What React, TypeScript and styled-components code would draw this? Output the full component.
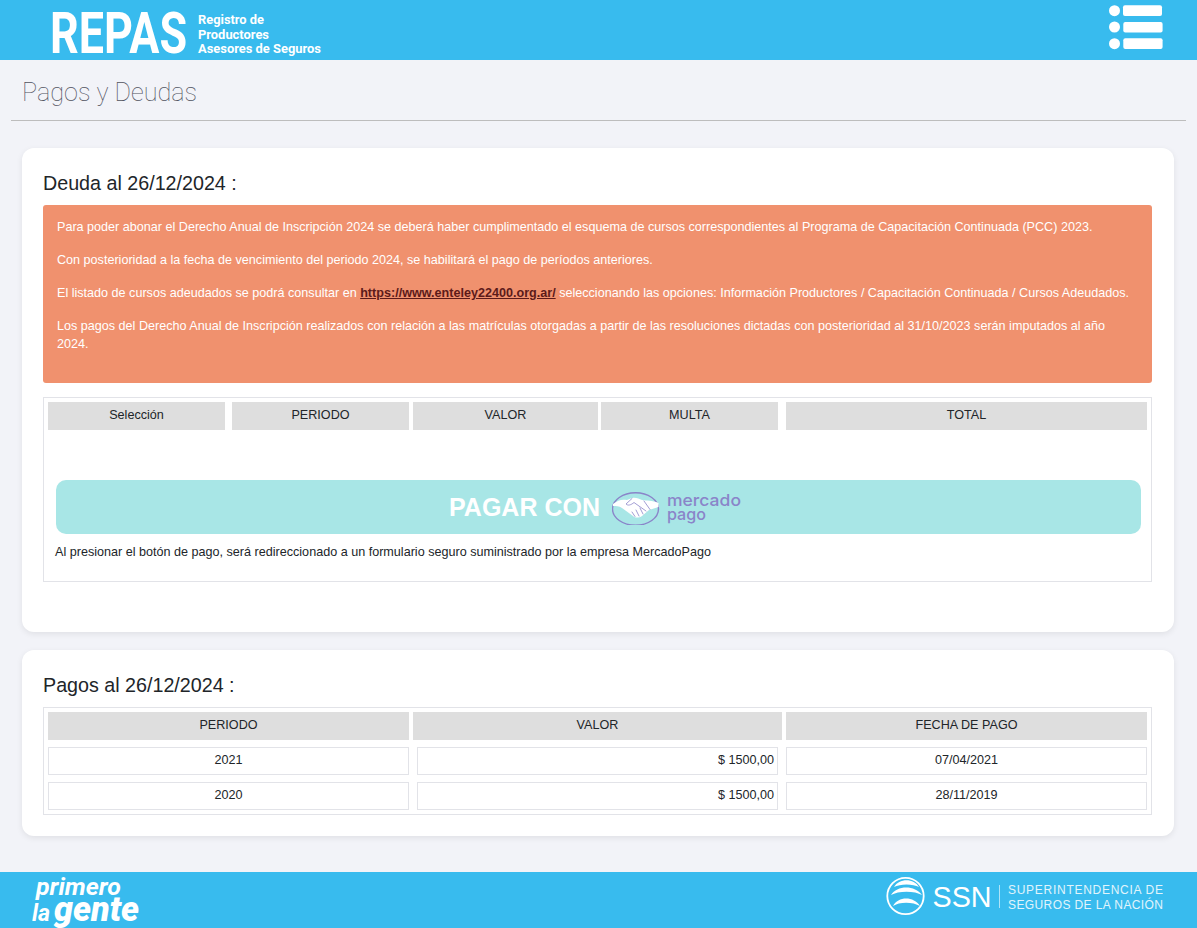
import styled, { createGlobalStyle } from "styled-components";

const debtColumns = [
  { label: "Selección", width: 177, gapAfter: 7 },
  { label: "PERIODO", width: 177, gapAfter: 4 },
  { label: "VALOR", width: 185, gapAfter: 3 },
  { label: "MULTA", width: 177, gapAfter: 8 },
  { label: "TOTAL", width: 361, gapAfter: 0 },
];

const payments = [
  { period: "2021", value: "$ 1500,00", date: "07/04/2021" },
  { period: "2020", value: "$ 1500,00", date: "28/11/2019" },
];

export default function App() {
  return (
    <Page>
      <GlobalStyle />
      <Header>
        <RepasLogo />
        <MenuIcon />
      </Header>

      <Main>
        <PageTitle>Pagos y Deudas</PageTitle>

        <DebtCard>
          <CardTitle>Deuda al 26/12/2024 :</CardTitle>
          <Alert>
            <AlertLine>
              Para poder abonar el Derecho Anual de Inscripción 2024 se deberá haber cumplimentado el esquema de cursos correspondientes al Programa de Capacitación Continuada (PCC) 2023.
            </AlertLine>
            <AlertLine>
              Con posterioridad a la fecha de vencimiento del periodo 2024, se habilitará el pago de períodos anteriores.
            </AlertLine>
            <AlertLine>
              El listado de cursos adeudados se podrá consultar en <AlertLink href="#">https://www.enteley22400.org.ar/</AlertLink> seleccionando las opciones: Información Productores / Capacitación Continuada / Cursos Adeudados.
            </AlertLine>
            <AlertLine>
              Los pagos del Derecho Anual de Inscripción realizados con relación a las matrículas otorgadas a partir de las resoluciones dictadas con posterioridad al 31/10/2023 serán imputados al año 2024.
            </AlertLine>
          </Alert>

          <DebtTable>
            <HeadRow>
              {debtColumns.map((col) => (
                <HeadCell key={col.label} $width={col.width} $gapAfter={col.gapAfter}>
                  {col.label}
                </HeadCell>
              ))}
            </HeadRow>
            <PayButton type="button">
              PAGAR CON
              <MercadoPagoLogo />
            </PayButton>
            <PayNote>
              Al presionar el botón de pago, será redireccionado a un formulario seguro suministrado por la empresa MercadoPago
            </PayNote>
          </DebtTable>
        </DebtCard>

        <PaymentsCard>
          <CardTitle>Pagos al 26/12/2024 :</CardTitle>
          <PaymentsTable>
            <HeadRow>
              <HeadCell $width={361} $gapAfter={4}>PERIODO</HeadCell>
              <HeadCell $width={369} $gapAfter={4}>VALOR</HeadCell>
              <HeadCell $width={361} $gapAfter={0}>FECHA DE PAGO</HeadCell>
            </HeadRow>
            {payments.map((row) => (
              <BodyRow key={row.period}>
                <BodyCell $width={361} $gapAfter={8}>{row.period}</BodyCell>
                <BodyCell $width={361} $gapAfter={8} $right>{row.value}</BodyCell>
                <BodyCell $width={361} $gapAfter={0}>{row.date}</BodyCell>
              </BodyRow>
            ))}
          </PaymentsTable>
        </PaymentsCard>
      </Main>

      <Footer>
        <GenteLogo />
        <SsnLogo />
      </Footer>
    </Page>
  );
}

function RepasLogo() {
  return (
    <LogoSvg width="280" height="60" viewBox="0 0 280 60">
      <text x="-1" y="52.5" fontFamily="Roboto" fontWeight="700" fontSize="57" fill="#fff" textLength="137" lengthAdjust="spacingAndGlyphs">REPAS</text>
      <text x="147" y="24" fontFamily="Roboto" fontWeight="700" fontSize="13.5" fill="#fff" textLength="66" lengthAdjust="spacingAndGlyphs">Registro de</text>
      <text x="147" y="38.5" fontFamily="Roboto" fontWeight="700" fontSize="13.5" fill="#fff" textLength="71" lengthAdjust="spacingAndGlyphs">Productores</text>
      <text x="147" y="53" fontFamily="Roboto" fontWeight="700" fontSize="13.5" fill="#fff" textLength="123" lengthAdjust="spacingAndGlyphs">Asesores de Seguros</text>
    </LogoSvg>
  );
}

function MenuIcon() {
  return (
    <LogoSvg width="56" height="60" viewBox="0 0 56 60" fill="#fff">
      <circle cx="6.5" cy="10.7" r="5.5" />
      <rect x="15" y="5.3" width="39" height="10.7" rx="2" />
      <circle cx="6.5" cy="27" r="5.5" />
      <rect x="15.3" y="22" width="39.3" height="10.5" rx="2" />
      <circle cx="6.5" cy="43.7" r="5.5" />
      <rect x="15.3" y="38.3" width="39.3" height="10.7" rx="2" />
    </LogoSvg>
  );
}

function MercadoPagoLogo() {
  return (
    <MpSvg width="130" height="36" viewBox="0 0 130 36">
      <ellipse cx="23.5" cy="20" rx="23" ry="16.3" fill="none" stroke="#8a84c9" strokeWidth="1.4" />
      <path d="M1 15 C6 11 10 10 15 11 L20 9 C24 8 27 10 30 11 C35 12 40 11 46.5 14 L46.5 18 L37 21 L30 27 C27 29 23 29 21 27 L10 19 C7 17 4 17 1 17 Z" fill="#fff" />
      <path d="M20 9.5 L14 15 C16 17 19 16 22 13.5 L34 22 M28 19 L31 25 M24 21 L27 27 M20 23 L23 27.5 M38 20.5 L32 12" fill="none" stroke="#8a84c9" strokeWidth="0.8" strokeLinecap="round" />
      <text x="55" y="17" fontFamily="Inter" fontWeight="450" fontSize="16.5" fill="#8a84c9" textLength="74" lengthAdjust="spacingAndGlyphs">mercado</text>
      <text x="55" y="31" fontFamily="Inter" fontWeight="450" fontSize="16.5" fill="#8a84c9" textLength="39" lengthAdjust="spacingAndGlyphs">pago</text>
    </MpSvg>
  );
}

function GenteLogo() {
  return (
    <LogoSvg width="110" height="56" viewBox="0 0 110 56">
      <text x="4" y="23" fontFamily="Roboto" fontStyle="italic" fontWeight="700" fontSize="24" fill="#fff" textLength="85" lengthAdjust="spacingAndGlyphs">primero</text>
      <text x="0" y="49" fontFamily="Roboto" fontStyle="italic" fontWeight="700" fontSize="24" fill="#fff" textLength="18" lengthAdjust="spacingAndGlyphs">la</text>
      <text x="22" y="49" fontFamily="Roboto" fontStyle="italic" fontWeight="900" fontSize="35" fill="#fff" textLength="85" lengthAdjust="spacingAndGlyphs">gente</text>
    </LogoSvg>
  );
}

function SsnLogo() {
  return (
    <LogoSvg width="280" height="56" viewBox="0 0 280 56">
      <circle cx="21.5" cy="24" r="18.2" fill="none" stroke="#fff" strokeWidth="1.8" />
      <path d="M10 15 C15 6 30 6 35 15 C29 11.5 16 11.5 10 15 Z" fill="#fff" />
      <path d="M7 23 C13 13 31 13 38 23 C31 18.5 14 18.5 7 23 Z" fill="#fff" />
      <path d="M9 34 C14 24 30 24 36 34 C29 29.5 15 29.5 9 34 Z" fill="#fff" />
      <text x="48.5" y="34.5" fontFamily="Liberation Sans" fontWeight="400" fontSize="29" fill="#fff" textLength="59" lengthAdjust="spacingAndGlyphs">SSN</text>
      <rect x="115" y="13" width="1" height="23" fill="#fff" opacity="0.6" />
      <text x="124" y="21.5" fontFamily="Liberation Sans" fontWeight="400" fontSize="12" fill="#fff" opacity="0.85" textLength="155" lengthAdjust="spacing">SUPERINTENDENCIA DE</text>
      <text x="124" y="36.5" fontFamily="Liberation Sans" fontWeight="400" fontSize="12" fill="#fff" opacity="0.85" textLength="155" lengthAdjust="spacing">SEGUROS DE LA NACIÓN</text>
    </LogoSvg>
  );
}

const GlobalStyle = createGlobalStyle`
  html, body {
    margin: 0;
    padding: 0;
  }

  body {
    background: #f2f3f8;
    font-family: "Liberation Sans", Arial, sans-serif;
    color: #212529;
  }
`;

const Page = styled.div`
  display: flex;
  flex-direction: column;
  min-height: 928px;
  overflow: hidden;
`;

const Header = styled.header`
  display: flex;
  justify-content: space-between;
  align-items: center;
  height: 60px;
  padding: 0 33px 0 51px;
  background: #38bbee;
`;

const LogoSvg = styled.svg`
  display: block;
  flex: none;
`;

const Main = styled.main`
  flex: 1;
  display: flex;
  flex-direction: column;
  padding: 0 23px 0 22px;
`;

const PageTitle = styled.h1`
  margin: 0 -12px 27px -11px;
  height: 61px;
  padding: 18px 0 0 11px;
  box-sizing: border-box;
  border-bottom: 1px solid #bdbdbd;
  font-family: "Roboto", sans-serif;
  font-size: 25.2px;
  line-height: 30px;
  font-weight: 100;
  color: #50525e;
`;

const Card = styled.section`
  background: #fff;
  border-radius: 12px;
  box-shadow: 0 2px 6px rgba(0, 0, 0, 0.08);
  padding: 22px 22px 0 21px;
  box-sizing: border-box;
`;

const DebtCard = styled(Card)`
  height: 484px;
  margin-bottom: 18px;
`;

const PaymentsCard = styled(Card)`
  height: 186px;
  margin-bottom: 36px;
`;

const CardTitle = styled.h2`
  margin: 0 0 9px;
  font-size: 19.7px;
  line-height: 26px;
  font-weight: 400;
  color: #212529;
`;

const Alert = styled.div`
  background: #f0916e;
  color: #fff;
  border-radius: 3px;
  height: 178px;
  box-sizing: border-box;
  padding: 13px 14px;
  margin-bottom: 14px;
  font-size: 12.6px;
  line-height: 18px;
`;

const AlertLine = styled.p`
  margin: 0 0 15px;
`;

const AlertLink = styled.a`
  color: #5c1a1a;
  font-weight: 700;
  text-decoration: underline;
`;

const TableBox = styled.div`
  border: 1px solid #e2e3e8;
  padding: 4px;
  box-sizing: border-box;
`;

const DebtTable = styled(TableBox)`
  height: 185px;
`;

const PaymentsTable = styled(TableBox)`
  height: 108px;
`;

const HeadRow = styled.div`
  display: flex;
`;

const BodyRow = styled.div`
  display: flex;
  margin-top: 7px;
`;

const HeadCell = styled.div<{ $width: number; $gapAfter: number }>`
  width: ${(p) => p.$width}px;
  margin-right: ${(p) => p.$gapAfter}px;
  height: 28px;
  box-sizing: border-box;
  background: #dedede;
  font-size: 12.6px;
  line-height: 26px;
  text-align: center;
  color: #212529;
`;

const BodyCell = styled.div<{ $width: number; $gapAfter: number; $right?: boolean }>`
  width: ${(p) => p.$width}px;
  margin-right: ${(p) => p.$gapAfter}px;
  height: 28px;
  box-sizing: border-box;
  border: 1px solid #e2e3e8;
  padding: 0 3px;
  font-size: 12.6px;
  line-height: 24px;
  text-align: ${(p) => (p.$right ? "right" : "center")};
  color: #212529;
`;

const PayButton = styled.button`
  display: flex;
  align-items: center;
  justify-content: center;
  gap: 12px;
  width: 1085px;
  height: 54px;
  margin: 50px 0 0 8px;
  padding: 0 6px 0 0;
  border: 0;
  border-radius: 10px;
  background: #a8e6e6;
  color: #fff;
  font-family: "Liberation Sans", Arial, sans-serif;
  font-size: 25px;
  font-weight: 700;
`;

const MpSvg = styled.svg`
  display: block;
  flex: none;
`;

const PayNote = styled.p`
  margin: 10px 0 0 7px;
  font-size: 12.6px;
  line-height: 16px;
  color: #212529;
`;

const Footer = styled.footer`
  display: flex;
  justify-content: space-between;
  align-items: center;
  height: 56px;
  padding: 0 33px 0 32px;
  background: #38bbee;
`;
